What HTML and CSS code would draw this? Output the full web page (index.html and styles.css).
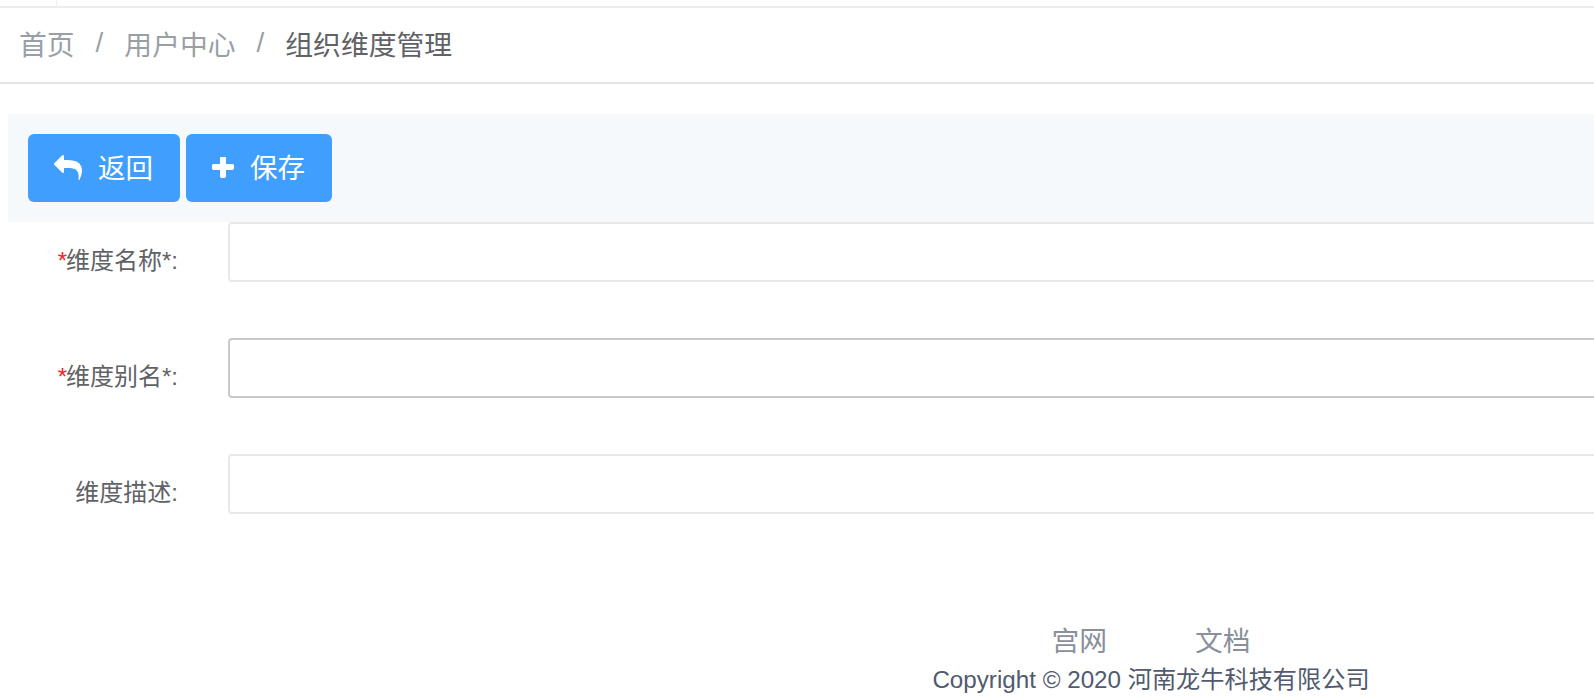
FILE: index.html
```html
<!DOCTYPE html>
<html lang="zh-CN">
<head>
    <meta charset="UTF-8">
    <title>组织维度管理</title>
    <link rel="stylesheet" href="styles.css">
</head>
<body>
    <div class="page">
        <div class="topbar"><span class="topbar-tab"></span></div>

        <nav class="breadcrumb">
            <a href="#">首页</a>
            <span class="sep">/</span>
            <a href="#">用户中心</a>
            <span class="sep">/</span>
            <span class="current">组织维度管理</span>
        </nav>

        <main class="content">
            <div class="toolbar">
                <button type="button" class="btn">
                    <svg class="icon icon-reply" viewBox="0 0 1792 1792"><path d="M1792 1120q0 166-127 451-3 7-10.5 24t-13.5 30-13 22q-12 17-28 17-15 0-23.5-10t-8.5-25q0-9 2.5-26.5t2.5-23.5q5-68 5-123 0-101-17.5-181t-48.5-138.5-80-101-105.5-69.5-133-42.5-154-21.5-175.5-6h-224v256q0 26-19 45t-45 19-45-19l-512-512q-19-19-19-45t19-45l512-512q19-19 45-19t45 19 19 45v256h224q713 0 875 403 53 134 53 333z"/></svg>
                    返回
                </button>
                <button type="button" class="btn">
                    <svg class="icon icon-plus" viewBox="192 192 1408 1408"><path d="M1600 736v192q0 40-28 68t-68 28h-416v416q0 40-28 68t-68 28h-192q-40 0-68-28t-28-68v-416h-416q-40 0-68-28t-28-68v-192q0-40 28-68t68-28h416v-416q0-40 28-68t68-28h192q40 0 68 28t28 68v416h416q40 0 68 28t28 68z"/></svg>
                    保存
                </button>
            </div>

            <form class="form" action="#">
                <div class="form-group">
                    <label for="name" class="required">维度名称*:</label>
                    <input type="text" id="name">
                </div>
                <div class="form-group">
                    <label for="alias" class="required">维度别名*:</label>
                    <input type="text" id="alias" class="hover">
                </div>
                <div class="form-group">
                    <label for="desc">维度描述:</label>
                    <input type="text" id="desc">
                </div>
            </form>
        </main>

        <footer class="footer">
            <div class="footer-links">
                <a href="#">宫网</a>
                <a href="#">文档</a>
            </div>
            <div class="copyright">Copyright © 2020 河南龙牛科技有限公司</div>
        </footer>
    </div>
</body>
</html>
```

FILE: styles.css
```css
html, body {
    margin: 0;
    height: 100%;
    overflow: hidden;
    background: #fff;
}
body {
    font-family: "Liberation Sans", "Noto Sans CJK SC", sans-serif;
}
/* the page is wider than the window, the right part is cut off */
.page {
    width: 2302px;
}
a {
    text-decoration: none;
    color: inherit;
}

.topbar {
    height: 6px;
    border-bottom: 2px solid #ececec;
}
.topbar-tab {
    display: block;
    width: 56px;
    height: 6px;
    border-right: 1px solid #eee;
}

.breadcrumb {
    height: 70px;
    padding: 0 0 4px 19px;
    display: flex;
    align-items: center;
    font-size: 27.8px;
    color: #9a9fa6;
    border-bottom: 2px solid #e4e4e4;
}
.breadcrumb .sep {
    margin: 0 21px;
}
.breadcrumb .current {
    color: #606266;
}

.content {
    padding: 30px 0 0 8px;
}
.toolbar {
    display: flex;
    gap: 6px;
    padding: 20px;
    background: #f5f9fc;
}
.btn {
    display: flex;
    align-items: center;
    gap: 16px;
    height: 68px;
    padding: 0 27px 4px 26px;
    border: 0;
    border-radius: 6px;
    background: #409eff;
    color: #fff;
    font-family: inherit;
    font-size: 27.5px;
}
.icon {
    margin-top: 4px;
    fill: #fff;
}
.icon-reply {
    width: 28px;
    height: 28px;
}
.icon-plus {
    width: 22px;
    height: 22px;
}

.form-group {
    display: flex;
    align-items: center;
    height: 60px;
    margin-bottom: 56px;
}
.form-group label {
    width: 170px;
    padding-top: 12px;
    text-align: right;
    font-size: 24px;
    color: #606266;
}
.required:before {
    content: "*";
    margin-right: -1px;
    color: #f5222d;
}
.form-group input {
    box-sizing: border-box;
    width: 2000px;
    height: 60px;
    margin-left: 50px;
    border: 2px solid #e8e8e8;
    border-radius: 4px;
    background: #fff;
    outline: none;
}
.form-group input.hover {
    border-color: #c8c9cc;
}

.footer {
    margin-top: 110px;
    text-align: center;
}
.footer-links {
    display: flex;
    justify-content: center;
    gap: 88px;
    font-size: 27.8px;
    line-height: 36px;
    color: #8a8f9c;
}
.copyright {
    margin-top: 5px;
    font-size: 24.2px;
    line-height: 30px;
    color: #515a6e;
}
```
